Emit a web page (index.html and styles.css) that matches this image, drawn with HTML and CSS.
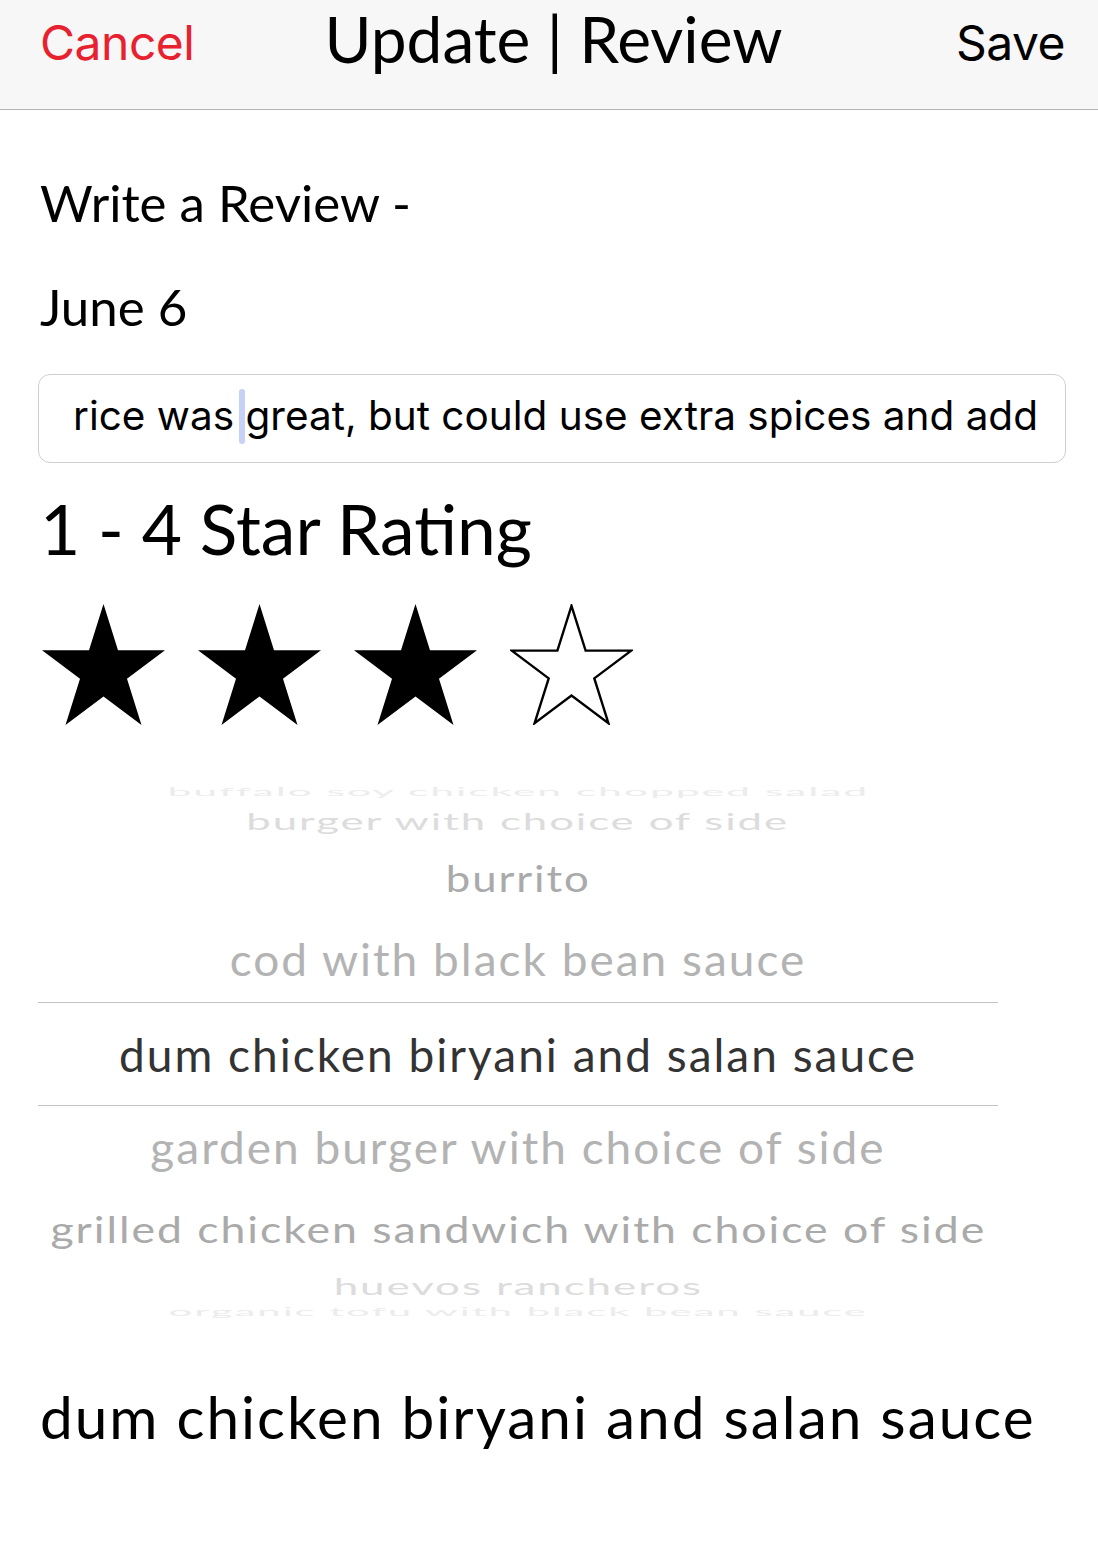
FILE: index.html
```html
<!DOCTYPE html>
<html>
<head>
<meta charset="utf-8">
<link rel="stylesheet" href="styles.css">
</head>
<body>
<div class="screen">
  <header class="navbar">
    <div class="nav-left">Cancel</div>
    <div class="nav-title">Update | Review</div>
    <div class="nav-right">Save</div>
  </header>

  <main class="content">
    <div class="label label-first">Write a Review -</div>
    <div class="label label-date">June 6</div>

    <div class="field">
      <span class="field-text">rice was <span class="cursor"></span>great, but could use extra spices and add</span>
    </div>

    <div class="rating-title">1 - 4 Star Rating</div>

    <div class="stars">
      <svg class="star" viewBox="0 0 100 95.1" preserveAspectRatio="none"><polygon class="star-fill" points="50,0 61.8,36.3 100,36.3 69.1,58.8 80.9,95.1 50,72.7 19.1,95.1 30.9,58.8 0,36.3 38.2,36.3"/></svg>
      <svg class="star" viewBox="0 0 100 95.1" preserveAspectRatio="none"><polygon class="star-fill" points="50,0 61.8,36.3 100,36.3 69.1,58.8 80.9,95.1 50,72.7 19.1,95.1 30.9,58.8 0,36.3 38.2,36.3"/></svg>
      <svg class="star" viewBox="0 0 100 95.1" preserveAspectRatio="none"><polygon class="star-fill" points="50,0 61.8,36.3 100,36.3 69.1,58.8 80.9,95.1 50,72.7 19.1,95.1 30.9,58.8 0,36.3 38.2,36.3"/></svg>
      <svg class="star" viewBox="-1.5 -1.5 103 98.1" preserveAspectRatio="none"><polygon class="star-empty" points="50,0 61.8,36.3 100,36.3 69.1,58.8 80.9,95.1 50,72.7 19.1,95.1 30.9,58.8 0,36.3 38.2,36.3"/></svg>
    </div>

    <div class="picker">
      <div class="row row-m4"><span>buffalo soy chicken chopped salad</span></div>
      <div class="row row-m3"><span>burger with choice of side</span></div>
      <div class="row row-m2"><span>burrito</span></div>
      <div class="row row-m1"><span>cod with black bean sauce</span></div>
      <div class="row row-sel"><span>dum chicken biryani and salan sauce</span></div>
      <div class="row row-p1"><span>garden burger with choice of side</span></div>
      <div class="row row-p2"><span>grilled chicken sandwich with choice of side</span></div>
      <div class="row row-p3"><span>huevos rancheros</span></div>
      <div class="row row-p4"><span>organic tofu with black bean sauce</span></div>
    </div>

    <div class="selected-out">dum chicken biryani and salan sauce</div>
  </main>
</div>
</body>
</html>
```

FILE: styles.css
```css
* { box-sizing: border-box; }

html, body {
  margin: 0;
  padding: 0;
  background: #ffffff;
}

.screen {
  width: 1098px;
  min-height: 1560px;
  background: #ffffff;
}

.navbar {
  height: 110px;
  background: #f7f7f7;
  border-bottom: 1px solid #b4b4b4;
  display: grid;
  grid-template-columns: 1fr auto 1fr;
  align-items: start;
  padding: 8px 33px 0 40px;
}

.nav-left {
  font-family: Inter, "Liberation Sans", sans-serif;
  font-size: 48px;
  color: #e8212f;
  line-height: 70px;
  letter-spacing: -0.5px;
}

.nav-title {
  font-family: Lato, "Open Sans", sans-serif;
  font-weight: 400;
  font-size: 64px;
  color: #000;
  line-height: 70px;
  padding-left: 2px;
  margin-top: -4px;
}

.nav-right {
  font-family: Inter, "Liberation Sans", sans-serif;
  font-size: 48px;
  color: #000;
  line-height: 70px;
  justify-self: end;
  letter-spacing: -0.5px;
}

.content {
  padding: 0 32px 0 38px;
}

.label {
  font-family: Lato, "Open Sans", sans-serif;
  font-size: 51px;
  line-height: 60px;
  color: #000;
  padding-left: 2px;
}

.label-first { margin-top: 63px; }
.label-date { margin-top: 44px; }

.field {
  margin-top: 37px;
  height: 89px;
  border: 1px solid #cfcfcf;
  border-radius: 12px;
  padding-left: 34px;
  display: flex;
  align-items: center;
  white-space: nowrap;
  overflow: hidden;
}

.field-text {
  font-family: Inter, "Liberation Sans", sans-serif;
  font-size: 40.5px;
  color: #000;
  position: relative;
  top: -2px;
}

.cursor {
  display: inline-block;
  width: 6px;
  height: 55px;
  background: #c7d1f7;
  vertical-align: -14px;
  margin-left: -6px;
  border-radius: 3px;
}

.rating-title {
  font-family: Lato, "Open Sans", sans-serif;
  font-size: 69.5px;
  line-height: 90px;
  color: #000;
  margin-top: 20px;
  padding-left: 2px;
}

.stars {
  display: flex;
  gap: 33px;
  margin-top: 31px;
  padding-left: 4px;
}

.star {
  width: 123px;
  height: 121px;
  display: block;
}

.star-fill { fill: #000; }
.star-empty { fill: #fff; stroke: #000; stroke-width: 2; }

.picker {
  margin-top: 53px;
  width: 960px;
  display: flex;
  flex-direction: column;
}

.row {
  display: flex;
  align-items: center;
  justify-content: center;
  overflow: visible;
  white-space: nowrap;
  font-family: Lato, "Open Sans", sans-serif;
  font-size: 46px;
  letter-spacing: 2px;
  color: #b3b3b3;
}

.row span { display: inline-block; }

.row-m4 { height: 26px; color: #ececec; }
.row-m4 span { transform: scale(0.93, 0.25); }
.row-m3 { height: 34px; color: #dcdcdc; }
.row-m3 span { transform: scale(0.95, 0.5); }
.row-m2 { height: 78px; color: #aaaaaa; }
.row-m2 span { transform: scale(0.95, 0.8); }
.row-m1 { height: 86px; color: #b3b3b3; }
.row-m1 span { transform: scale(1, 0.95); }

.row-sel {
  height: 104px;
  border-top: 1px solid #c4c4c4;
  border-bottom: 1px solid #c4c4c4;
  color: #333333;
}

.row-p1 { height: 82px; color: #b3b3b3; }
.row-p1 span { transform: scale(1, 0.95); }
.row-p2 { height: 80px; color: #aaaaaa; }
.row-p2 span { transform: scale(0.97, 0.8); }
.row-p3 { height: 36px; color: #dcdcdc; }
.row-p3 span { transform: scale(0.955, 0.5); }
.row-p4 { height: 14px; color: #ececec; }
.row-p4 span { transform: scale(0.915, 0.25); }

.selected-out {
  font-family: Lato, "Open Sans", sans-serif;
  font-size: 58.5px;
  letter-spacing: 2px;
  color: #000;
  margin-top: 63px;
  padding-left: 2px;
}
```
